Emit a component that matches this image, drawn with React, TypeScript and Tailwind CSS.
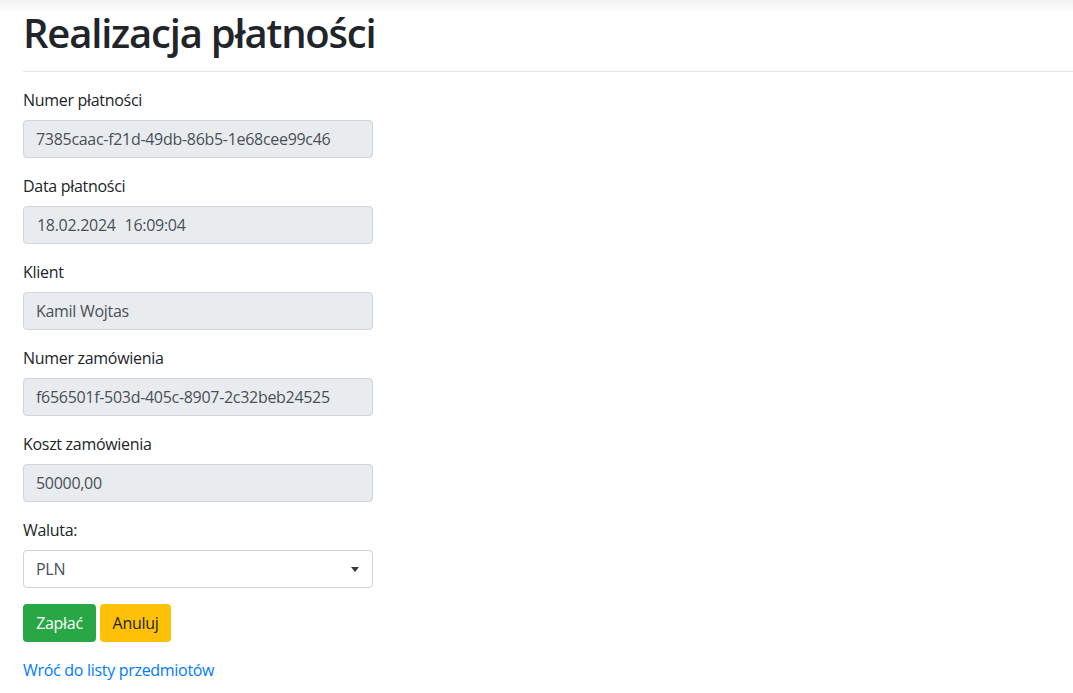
import React from "react";

const font = { fontFamily: '"Segoe UI", "Open Sans", "Noto Sans", sans-serif' };

function Field({ label, value, pl = "pl-3" }: { label: string; value: React.ReactNode; pl?: string }) {
  return (
    <div className="mb-4">
      <div className="mb-2 text-[16px] leading-6 tracking-[-0.3px] text-[#212529]">{label}</div>
      <div
        className={`flex h-[38px] w-[350px] items-center rounded border border-[#ced4da] bg-[#e9ecef] ${pl} text-[16px] tracking-[-0.3px] text-[#495057]`}
      >
        {value}
      </div>
    </div>
  );
}

export default function App() {
  return (
    <div className="relative min-h-[693px] w-[1073px] overflow-hidden bg-white" style={font}>
      <div className="pointer-events-none absolute left-0 right-0 top-0 h-[14px] bg-gradient-to-b from-[#f2f2f2] to-white" />
      <div className="pl-[23px]">
        <h1 className="pt-[9px] text-[40px] font-semibold leading-[48px] tracking-[-1.2px] text-[#212529]">
          Realizacja płatności
        </h1>
        <div className="mt-[14px] h-px bg-[#e5e5e5]" />
        <div className="pt-4">
          <Field label="Numer płatności" value="7385caac-f21d-49db-86b5-1e68cee99c46" />
          <Field
            label="Data płatności"
            value={
              <>
                <span>18.02.2024</span>
                <span className="ml-[9px]">16:09:04</span>
              </>
            }
            pl="pl-[13px]"
          />
          <Field label="Klient" value="Kamil Wojtas" />
          <Field label="Numer zamówienia" value="f656501f-503d-405c-8907-2c32beb24525" />
          <Field label="Koszt zamówienia" value="50000,00" />
          <div className="mb-4">
            <div className="mb-2 text-[16px] leading-6 tracking-[-0.3px] text-[#212529]">Waluta:</div>
            <div className="flex h-[38px] w-[350px] items-center justify-between rounded border border-[#ced4da] bg-white pl-3 pr-[13px] text-[16px] tracking-[-0.3px] text-[#495057]">
              <span>PLN</span>
              <svg width="8" height="5" viewBox="0 0 8 5">
                <path d="M0 0h8L4 5z" fill="#343a40" />
              </svg>
            </div>
          </div>
          <div className="flex gap-1">
            <button className="h-[38px] w-[73px] rounded bg-[#28a745] text-[16px] tracking-[-0.3px] text-white">
              Zapłać
            </button>
            <button className="h-[38px] w-[71px] rounded bg-[#ffc107] text-[16px] tracking-[-0.3px] text-[#212529]">
              Anuluj
            </button>
          </div>
          <div className="mt-4 text-[16px] leading-6 tracking-[-0.3px] text-[#007bff]">Wróć do listy przedmiotów</div>
        </div>
      </div>
    </div>
  );
}
